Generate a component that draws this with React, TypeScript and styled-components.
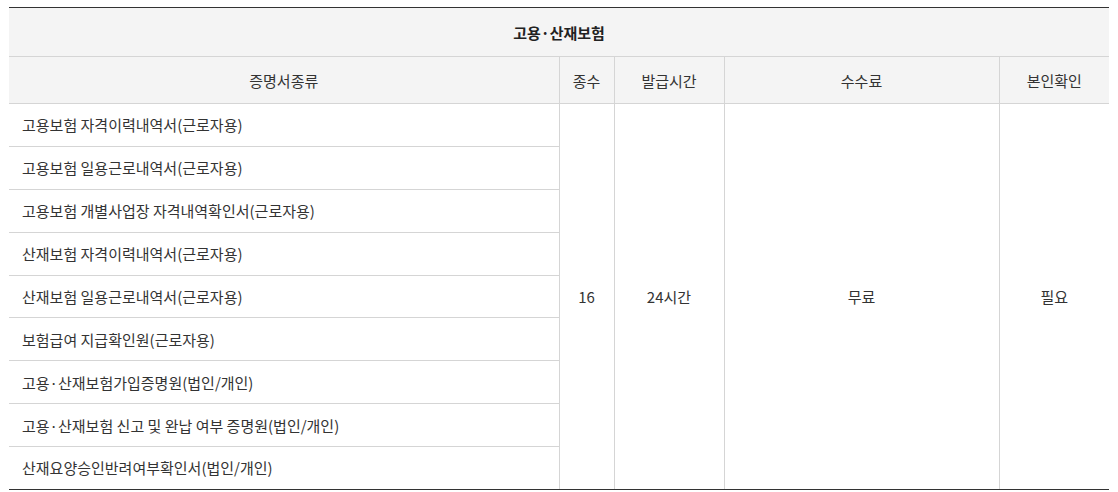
import React from "react";
import styled, { createGlobalStyle } from "styled-components";

const GlobalStyle = createGlobalStyle`
  html, body { margin: 0; padding: 0; background: #ffffff; }
  body {
    font-family: "Noto Sans CJK KR", "Noto Sans", sans-serif;
    color: #333333;
  }
`;

const Page = styled.div`
  padding: 7px 9px;
`;

const Table = styled.table`
  width: 1100px;
  border-collapse: collapse;
  table-layout: fixed;
  border-top: 1px solid #333333;
  border-bottom: 1px solid #333333;
  font-size: 15px;
`;

const Th = styled.th<{ $title?: boolean }>`
  background: #f4f4f4;
  height: ${(p) => (p.$title ? 48 : 46)}px;
  padding: 0 8px;
  font-weight: ${(p) => (p.$title ? 700 : 400)};
  color: ${(p) => (p.$title ? "#222222" : "#333333")};
  text-align: center;
  border: 1px solid #d5d5d5;
  border-top: none;
  &:first-child { border-left: none; }
  &:last-child { border-right: none; }
`;

const NameCell = styled.td<{ $last?: boolean }>`
  height: 41.875px;
  padding: 0 13px;
  text-align: left;
  border: 1px solid #d5d5d5;
  border-left: none;
  border-bottom-color: ${(p) => (p.$last ? "#333333" : "#d5d5d5")};
  white-space: nowrap;
`;

const ValueCell = styled.td`
  text-align: center;
  border: 1px solid #d5d5d5;
  border-bottom-color: #333333;
  &:last-child { border-right: none; }
`;

const docs = [
  "고용보험 자격이력내역서(근로자용)",
  "고용보험 일용근로내역서(근로자용)",
  "고용보험 개별사업장 자격내역확인서(근로자용)",
  "산재보험 자격이력내역서(근로자용)",
  "산재보험 일용근로내역서(근로자용)",
  "보험급여 지급확인원(근로자용)",
  "고용·산재보험가입증명원(법인/개인)",
  "고용·산재보험 신고 및 완납 여부 증명원(법인/개인)",
  "산재요양승인반려여부확인서(법인/개인)",
];

export default function App() {
  return (
    <>
      <GlobalStyle />
      <Page>
        <Table>
          <colgroup>
            <col style={{ width: 550 }} />
            <col style={{ width: 55 }} />
            <col style={{ width: 110 }} />
            <col style={{ width: 275 }} />
            <col style={{ width: 110 }} />
          </colgroup>
          <thead>
            <tr>
              <Th $title colSpan={5}>고용·산재보험</Th>
            </tr>
            <tr>
              <Th>증명서종류</Th>
              <Th>종수</Th>
              <Th>발급시간</Th>
              <Th>수수료</Th>
              <Th>본인확인</Th>
            </tr>
          </thead>
          <tbody>
            {docs.map((d, i) => (
              <tr key={d}>
                <NameCell $last={i === docs.length - 1}>{d}</NameCell>
                {i === 0 && (
                  <>
                    <ValueCell rowSpan={docs.length}>16</ValueCell>
                    <ValueCell rowSpan={docs.length}>24시간</ValueCell>
                    <ValueCell rowSpan={docs.length}>무료</ValueCell>
                    <ValueCell rowSpan={docs.length}>필요</ValueCell>
                  </>
                )}
              </tr>
            ))}
          </tbody>
        </Table>
      </Page>
    </>
  );
}
